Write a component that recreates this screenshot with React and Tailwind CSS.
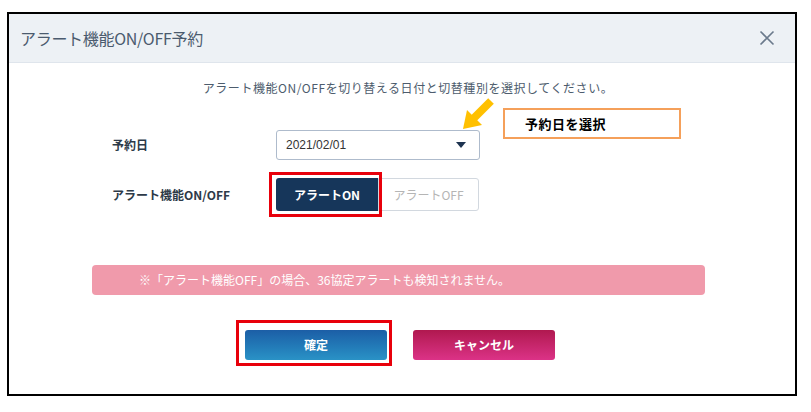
import React from 'react';

// Alert ON/OFF reservation dialog, with the red/orange/yellow annotation marks on top.
const FONT = { fontFamily: '"Noto Sans CJK JP", "Noto Sans", sans-serif' };

function CloseIcon() {
  return (
    <svg width="16" height="16" viewBox="0 0 16 16" fill="none">
      <path d="M1.5 1.5 L14.5 14.5 M14.5 1.5 L1.5 14.5" stroke="#6b7a8c" strokeWidth="1.6" />
    </svg>
  );
}

function YellowArrow() {
  return (
    <svg width="36" height="36" viewBox="0 0 36 36" className="absolute left-[450px] top-[34px]">
      <path d="M32 4 L15 21" stroke="#ffc000" strokeWidth="8" strokeLinecap="butt" />
      <path d="M4 32 L8 13 L23 28 Z" fill="#ffc000" />
    </svg>
  );
}

export default function App() {
  return (
    <div className="w-[811px] h-[412px] bg-white pt-[12px] pl-[7px]" style={FONT}>
      <div className="w-[790px] h-[384px] border-2 border-black flex flex-col">
        {/* header */}
        <div className="h-[49px] shrink-0 bg-[#edf1f5] border-b border-[#dfe5ec] flex items-center justify-between pl-[11px] pr-[20px]">
          <span className="text-[16px] text-[#4b5b6e] tracking-[-0.3px]">アラート機能ON/OFF予約</span>
          <CloseIcon />
        </div>

        {/* body */}
        <div className="relative flex-1 flex flex-col">
          <p className="pt-[17px] pl-[12px] text-center text-[12px] leading-[16px] tracking-[0.55px] text-[#4d5c6d]">
            アラート機能ON/OFFを切り替える日付と切替種別を選択してください。
          </p>

          <YellowArrow />

          <div className="absolute left-[494px] top-[45px] w-[178px] h-[31px] border-2 border-[#f5a05a] flex items-center pl-[20px]">
            <span className="text-[13px] font-bold text-black tracking-[0.5px]">予約日を選択</span>
          </div>

          {/* row: date */}
          <div className="mt-[34px] ml-[103px] flex items-center">
            <span className="w-[164px] text-[12px] font-bold text-[#2d3a48]">予約日</span>
            <div className="w-[204px] h-[30px] border border-[#aebbcc] rounded-[3px] flex items-center justify-between pl-[9px] pr-[13px]">
              <span className="text-[12px] text-[#333]" style={{ fontFamily: '"Liberation Sans", sans-serif' }}>2021/02/01</span>
              <span className="w-0 h-0 border-l-[5px] border-r-[5px] border-t-[6px] border-l-transparent border-r-transparent border-t-[#1d3350]" />
            </div>
          </div>

          {/* row: on/off */}
          <div className="mt-[18px] ml-[103px] flex items-center">
            <span className="w-[164px] text-[12px] font-bold text-[#2d3a48]">アラート機能ON/OFF</span>
            <div className="relative flex">
              <div className="absolute left-[-7px] top-[-6px] w-[113px] h-[45px] border-[3px] border-[#e8000b]" />
              <button className="w-[102px] h-[33px] bg-[#16365a] rounded-l-[3px] text-white text-[12px] font-bold">
                アラートON
              </button>
              <button className="w-[101px] h-[33px] bg-white border border-[#d2d8df] rounded-r-[3px] text-[#b5b5b5] text-[12px]">
                アラートOFF
              </button>
            </div>
          </div>

          {/* notice */}
          <div className="mt-[54px] ml-[83px] w-[613px] h-[30px] bg-[#f09aab] rounded-[4px] flex items-center pl-[47px]">
            <span className="text-[12px] text-white">※「アラート機能OFF」の場合、36協定アラートも検知されません。</span>
          </div>

          {/* footer buttons */}
          <div className="mt-[35px] ml-[236px] flex items-center gap-[26px]">
            <div className="relative">
              <div className="absolute left-[-9px] top-[-10px] w-[156px] h-[46px] border-[3px] border-[#e8000b]" />
              <button className="w-[142px] h-[30px] rounded-[3px] bg-gradient-to-b from-[#1c5ea6] to-[#2a92c6] text-white text-[12px] font-bold">
                確定
              </button>
            </div>
            <button className="w-[142px] h-[30px] rounded-[3px] bg-gradient-to-b from-[#b0184f] to-[#dc3287] text-white text-[12px] font-bold">
              キャンセル
            </button>
          </div>
        </div>
      </div>
    </div>
  );
}
